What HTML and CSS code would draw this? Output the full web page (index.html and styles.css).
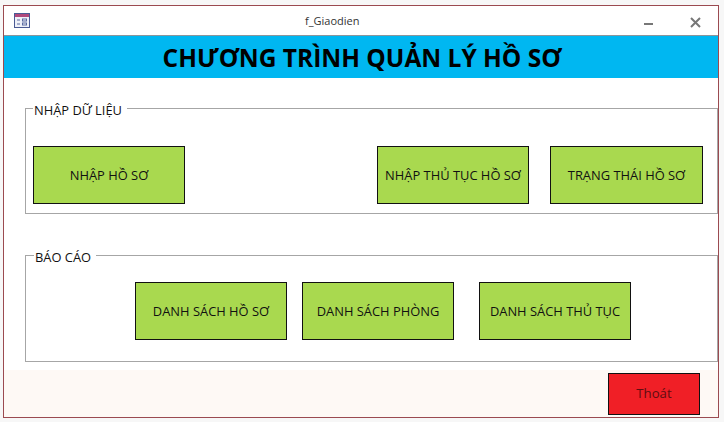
FILE: index.html
```html
<!DOCTYPE html>
<html>
  <head>
    <title>f_Giaodien</title>
    <link rel="stylesheet" href="styles.css">
  </head>
  <body>
    <div class="window">
      <div class="title-bar">
        <svg class="form-icon" width="18" height="15" viewBox="0 0 18 15">
          <rect x="0.5" y="0.5" width="15" height="14" fill="#eef0f8" stroke="#4a5a94"/>
          <rect x="1" y="1" width="14" height="3" fill="#b0487c"/>
          <path d="M3 7h3M3 11h3" stroke="#5a6aa0"/>
          <rect x="8.5" y="6" width="4" height="2" fill="none" stroke="#5a6aa0"/>
          <rect x="8.5" y="10" width="4" height="2" fill="none" stroke="#5a6aa0"/>
        </svg>
        <span class="title-text">f_Giaodien</span>
        <svg class="min-icon" width="10" height="4" viewBox="0 0 10 4">
          <path d="M0 2h9" stroke="#777" stroke-width="2"/>
        </svg>
        <svg class="close-icon" width="11" height="11" viewBox="0 0 11 11">
          <path d="M1 1l9 9M10 1l-9 9" stroke="#777" stroke-width="2"/>
        </svg>
      </div>

      <div class="banner">CHƯƠNG TRÌNH QUẢN LÝ HỒ SƠ</div>

      <fieldset class="group group-input">
        <legend>NHẬP DỮ LIỆU</legend>
        <div class="btn-row">
          <button class="green-btn btn-a">NHẬP HỒ SƠ</button>
          <button class="green-btn btn-b">NHẬP THỦ TỤC HỒ SƠ</button>
          <button class="green-btn btn-c">TRẠNG THÁI HỒ SƠ</button>
        </div>
      </fieldset>

      <fieldset class="group group-report">
        <legend>BÁO CÁO</legend>
        <div class="btn-row">
          <button class="green-btn btn-d">DANH SÁCH HỒ SƠ</button>
          <button class="green-btn btn-e">DANH SÁCH PHÒNG</button>
          <button class="green-btn btn-f">DANH SÁCH THỦ TỤC</button>
        </div>
      </fieldset>

      <div class="footer">
        <button class="exit-btn">Thoát</button>
      </div>
    </div>
  </body>
</html>
```

FILE: styles.css
```css
html, body {
  margin: 0;
  height: 422px;
  overflow: hidden;
}
body {
  background-color: #f7f7f7;
  font-family: "Open Sans", "Noto Sans", sans-serif;
  color: #111;
}
.window {
  box-sizing: border-box;
  width: 716px;
  height: 413px;
  margin: 5px 0 0 3px;
  background-color: white;
  border: 1px solid #9b4a50;
  display: flex;
  flex-direction: column;
}
.title-bar {
  box-sizing: border-box;
  height: 30px;
  flex: none;
  display: flex;
  align-items: center;
  border-bottom: 1px solid #8a959c;
  font-size: 11px;
  color: #333;
}
.form-icon {
  margin-left: 10px;
}
.title-text {
  margin-left: 273px;
}
.min-icon {
  margin-left: 285px;
  margin-top: 6px;
}
.close-icon {
  margin-left: 36px;
  margin-top: 3px;
}
.banner {
  box-sizing: border-box;
  height: 42px;
  flex: none;
  padding-left: 2px;
  background-color: #00b7f1;
  color: black;
  font-size: 24.5px;
  font-weight: bold;
  line-height: 43px;
  text-align: center;
}
.group {
  box-sizing: border-box;
  margin: 0 0 0 21px;
  padding: 0;
  width: 693px;
  border: 1px solid #a6a6a6;
  flex: none;
}
.group legend {
  margin-left: 7px;
  padding: 4px 5px 0 1px;
  font-size: 12.9px;
  line-height: 17px;
}
.group-input {
  margin-top: 20px;
  height: 116px;
}
.group-report {
  margin-top: 31px;
  height: 117px;
}
.group-report legend {
  margin-left: 8px;
}
.btn-row {
  display: flex;
}
.group-input .btn-row {
  padding-top: 27px;
}
.group-report .btn-row {
  padding-top: 16px;
}
.green-btn {
  box-sizing: border-box;
  width: 152px;
  height: 58px;
  padding: 0;
  background-color: #a9d94f;
  border: 1px solid #111;
  color: #111;
  font-family: inherit;
  font-size: 12.9px;
}
.btn-a { margin-left: 7px; }
.btn-b { margin-left: 192px; }
.btn-c { margin-left: 21px; width: 153px; }
.btn-d { margin-left: 109px; }
.btn-e { margin-left: 15px; }
.btn-f { margin-left: 25px; }
.footer {
  flex: 1;
  margin-top: 8px;
  background-color: #fef9f5;
  display: flex;
  justify-content: flex-end;
  padding: 3px 18px 0 0;
}
.exit-btn {
  box-sizing: border-box;
  width: 92px;
  height: 42px;
  padding: 0 0 2px;
  background-color: #f01f26;
  border: 1px solid #111;
  color: #5f0d11;
  font-family: inherit;
  font-size: 13.2px;
}
```
